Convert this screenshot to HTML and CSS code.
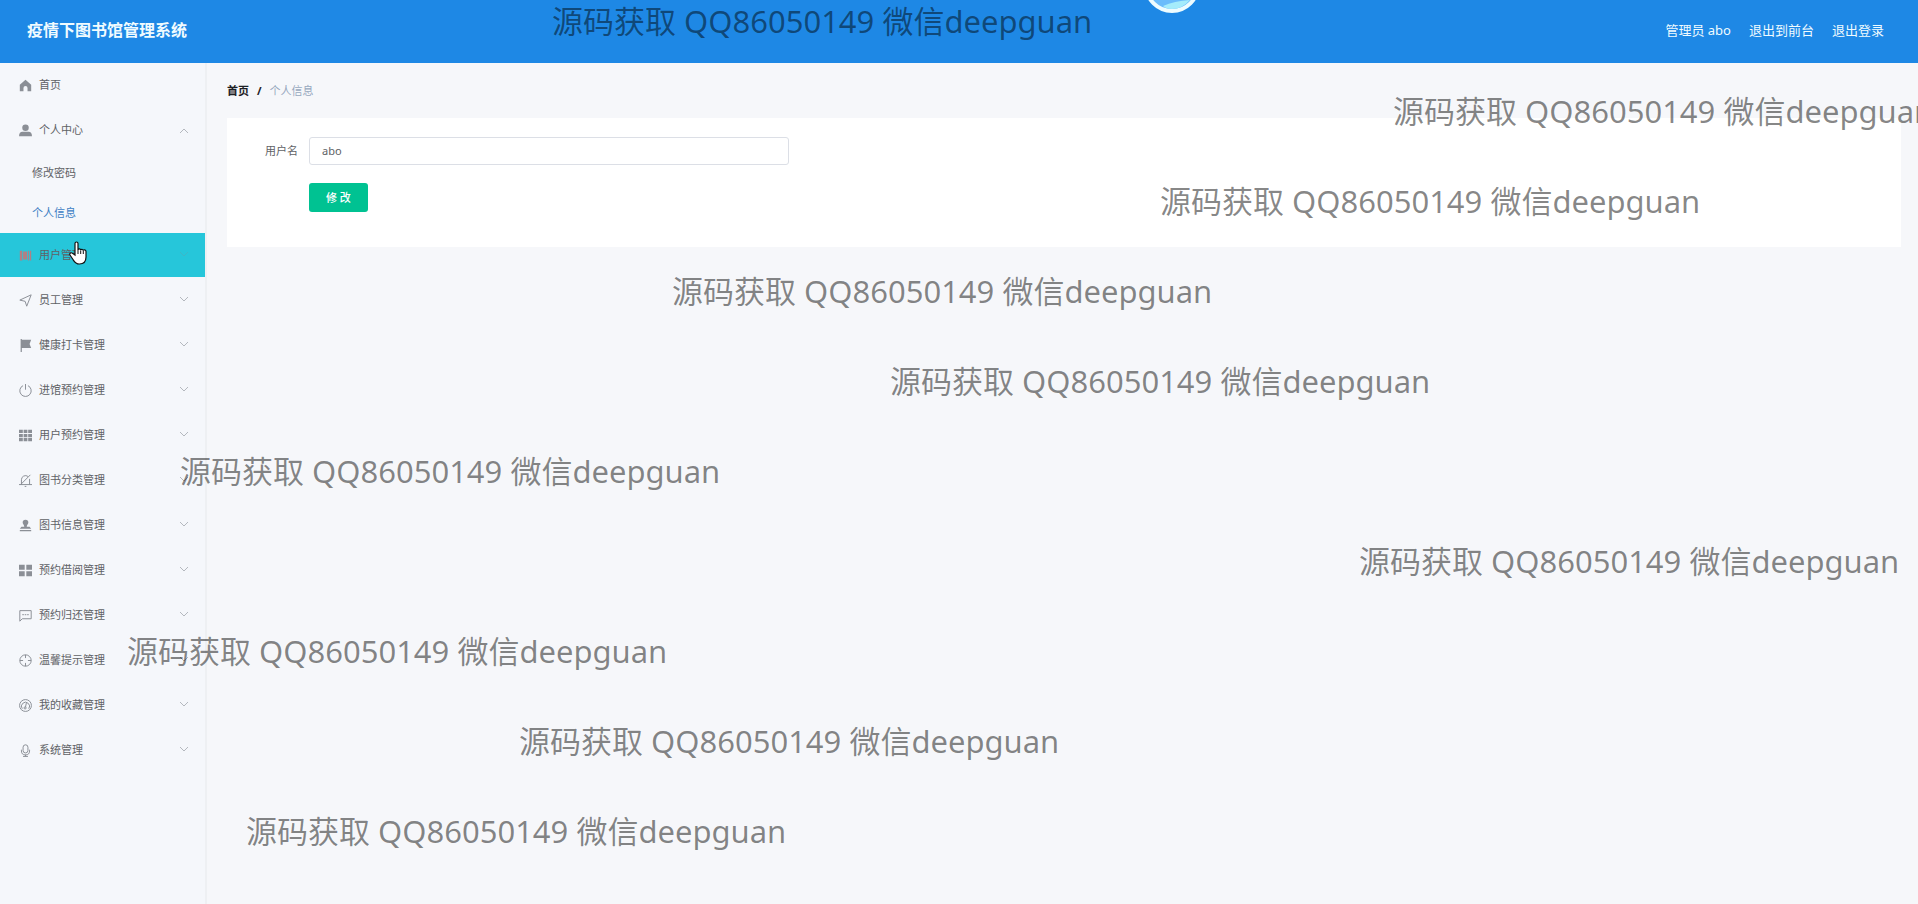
FILE: index.html
```html
<!DOCTYPE html>
<html lang="zh-CN">
<head>
<meta charset="utf-8">
<title>疫情下图书馆管理系统</title>
<link rel="stylesheet" href="styles.css">
</head>
<body>
<svg class="defs" aria-hidden="true">
  <symbol id="down" viewBox="0 0 10 10"><path d="M1 2l4 4 4-4" fill="none" stroke="currentColor"/></symbol>
</svg>
<header class="header">
  <h1 class="title">疫情下图书馆管理系统</h1>
  <nav class="account">
    <span>管理员 abo</span>
    <a href="#">退出到前台</a>
    <a href="#">退出登录</a>
  </nav>
</header>
<div class="layout">
  <aside class="sidebar">
    <ul class="menu">
      <li><a class="item" href="#"><svg class="icon" viewBox="0 0 16 16"><path class="solid" d="M8 1L1 7v8h4.500v-4a2.500 2.500 0 0 1 5 0v4H15V7z"/></svg><span>首页</span></a></li>
      <li><a class="item" href="#"><svg class="icon" viewBox="0 0 16 16"><circle class="solid" cx="8" cy="4.500" r="4"/><path class="solid" d="M0 15c0-4 2-5.500 4-5.500h8c2 0 4 1.500 4 5.500z"/></svg><span>个人中心</span><svg class="arrow open"><use href="#down"/></svg></a>
        <ul class="submenu">
          <li><a class="subitem" href="#">修改密码</a></li>
          <li><a class="subitem current" href="#">个人信息</a></li>
        </ul>
      </li>
      <li><a class="item active" href="#"><svg class="icon" viewBox="0 0 16 16"><path class="solid" d="M1 2h3v12H1zM5 3h5v10H5zM11 2h1.500v12H11zM13.500 2H15v12h-1.500z"/></svg><span>用户管理</span><svg class="arrow"><use href="#down"/></svg></a></li>
      <li><a class="item" href="#"><svg class="icon" viewBox="0 0 16 16"><path d="M1 7.500L15 1 9.500 15 7.500 9z"/></svg><span>员工管理</span><svg class="arrow"><use href="#down"/></svg></a></li>
      <li><a class="item" href="#"><svg class="icon" viewBox="0 0 16 16"><path class="solid" d="M2 0h1.500v1H15l-2 5 2 5H3.500v5H2z"/></svg><span>健康打卡管理</span><svg class="arrow"><use href="#down"/></svg></a></li>
      <li><a class="item" href="#"><svg class="icon" viewBox="0 0 16 16"><path d="M5 2a7 7 0 1 0 6 0M8 0v7"/></svg><span>进馆预约管理</span><svg class="arrow"><use href="#down"/></svg></a></li>
      <li><a class="item" href="#"><svg class="icon" viewBox="0 0 16 16"><path class="solid" d="M0 1h4.700v4H0zM5.700 1h4.600v4H5.700zM11.300 1H16v4h-4.700zM0 6h4.700v4H0zM5.700 6h4.600v4H5.700zM11.300 6H16v4h-4.700zM0 11h4.700v4H0zM5.700 11h4.600v4H5.700zM11.300 11H16v4h-4.700z"/></svg><span>用户预约管理</span><svg class="arrow"><use href="#down"/></svg></a></li>
      <li><a class="item" href="#"><svg class="icon" viewBox="0 0 16 16"><path d="M3 13V7a5 5 0 0 1 8-4M13 6v7M0 13h16M7 15.300h2M2 13L14 1"/></svg><span>图书分类管理</span><svg class="arrow"><use href="#down"/></svg></a></li>
      <li><a class="item" href="#"><svg class="icon" viewBox="0 0 16 16"><path class="solid" d="M8 1a3.500 3.500 0 0 1 3.500 3.500C11.500 6 9.500 7 9.500 9.500H13l2 2.500H1l2-2.500h3.500C6.500 7 4.500 6 4.500 4.500A3.500 3.500 0 0 1 8 1zM1 13.500h14V15H1z"/></svg><span>图书信息管理</span><svg class="arrow"><use href="#down"/></svg></a></li>
      <li><a class="item" href="#"><svg class="icon" viewBox="0 0 16 16"><path class="solid" d="M0 1h7v6H0zM9 1h7v6H9zM0 9h7v6H0zM9 9h7v6H9z"/></svg><span>预约借阅管理</span><svg class="arrow"><use href="#down"/></svg></a></li>
      <li><a class="item" href="#"><svg class="icon" viewBox="0 0 16 16"><path d="M1 2h14v10H4l-3 3zM4 7h2M7 7h2M10 7h2"/></svg><span>预约归还管理</span><svg class="arrow"><use href="#down"/></svg></a></li>
      <li><a class="item" href="#"><svg class="icon" viewBox="0 0 16 16"><circle cx="8" cy="8" r="7"/><path d="M8 1v4M8 11v4M1 8h4M11 8h4"/></svg><span>温馨提示管理</span><svg class="arrow"><use href="#down"/></svg></a></li>
      <li><a class="item" href="#"><svg class="icon" viewBox="0 0 16 16"><circle cx="8" cy="8" r="7.300"/><path d="M4 12a5 5 0 1 1 8 0M9 5L8 10"/><circle cx="7.500" cy="11" r="1.300"/></svg><span>我的收藏管理</span><svg class="arrow"><use href="#down"/></svg></a></li>
      <li><a class="item" href="#"><svg class="icon" viewBox="0 0 16 16"><rect x="5" y="1" width="6" height="10" rx="3"/><path d="M3 7v1.500a5 5 0 0 0 10 0V7M8 13v2M5 15.300h6"/></svg><span>系统管理</span><svg class="arrow"><use href="#down"/></svg></a></li>
    </ul>
  </aside>
  <main class="main">
    <nav class="breadcrumb" aria-label="breadcrumb">
      <a href="#">首页</a><span class="slash">/</span><span class="here">个人信息</span>
    </nav>
    <form class="card">
      <div class="field">
        <label for="username">用户名</label>
        <input id="username" type="text" value="abo">
      </div>
      <button class="submit" type="button">修 改</button>
    </form>
  </main>
</div>
<svg class="bubble" viewBox="0 0 56 56" aria-hidden="true">
  <circle cx="28" cy="28" r="26" fill="#6bbcfb" stroke="#eefcff" stroke-width="4"/>
  <path d="M19 49Q30 44 46 43Q38 52 28 52Q22 52 19 49z" fill="#a5ecfb"/>
</svg>
<svg class="pointer" viewBox="0 0 18 24" aria-hidden="true">
  <path d="M6 14V2.500C6 .5 9 .5 9 2.500V9c0-1.500 2.700-1.500 2.700.3 0-1.500 2.600-1.300 2.600.5 0-1.300 2.700-1.200 2.700.7V16c0 4-2 7-6.500 7-4 0-5-2-6.500-4.500L1 14c-.8-1.600 1.200-3 2.500-1.700z" fill="#fff" stroke="#111" stroke-width="1.200"/>
  <path d="M9 9v4M11.700 9.500V13M14.300 10v3" stroke="#111" fill="none"/>
</svg>
<div class="marks" aria-hidden="true">
  <span class="mark m1">源码获取 QQ86050149 微信deepguan</span>
  <span class="mark m2">源码获取 QQ86050149 微信deepguan</span>
  <span class="mark m3">源码获取 QQ86050149 微信deepguan</span>
  <span class="mark m4">源码获取 QQ86050149 微信deepguan</span>
  <span class="mark m5">源码获取 QQ86050149 微信deepguan</span>
  <span class="mark m6">源码获取 QQ86050149 微信deepguan</span>
  <span class="mark m7">源码获取 QQ86050149 微信deepguan</span>
  <span class="mark m8">源码获取 QQ86050149 微信deepguan</span>
  <span class="mark m9">源码获取 QQ86050149 微信deepguan</span>
  <span class="mark m10">源码获取 QQ86050149 微信deepguan</span>
</div>
</body>
</html>
```
FILE: styles.css
```css
* { box-sizing: border-box; }
body {
  margin: 0;
  min-height: 100vh;
  display: flex;
  flex-direction: column;
  background: #f6f7fa;
  color: #606266;
  font: 11px/16px "Noto Sans", "Noto Sans CJK SC", sans-serif;
}
a { color: inherit; text-decoration: none; }
ul { list-style: none; margin: 0; padding: 0; }
.defs { display: none; }

.header {
  display: flex;
  align-items: center;
  justify-content: space-between;
  height: 63px;
  padding: 0 34px 3px 27px;
  background: #1e88e5;
  color: #f0fbff;
}
.title { margin: 0; font-size: 16px; line-height: 24px; font-weight: 700; }
.account { display: flex; gap: 18px; font-size: 13px; line-height: 20px; }

.layout { flex: 1; display: flex; }
.sidebar {
  flex: none;
  width: 207px;
  background: #f5f7fb;
  border-right: 2px solid #eef0f3;
}
.item {
  display: flex;
  align-items: center;
  height: 44px;
  margin-bottom: 1px;
  padding: 0 16px 0 19px;
}
.item.active { background: #26c6da; }
.item.active .icon { color: #b08084; }
.item.active .arrow { color: #3fb6c6; }
.icon {
  width: 13px;
  height: 13px;
  margin-right: 7px;
  color: #8b8f96;
  fill: none;
  stroke: currentColor;
  stroke-width: 1.2;
}
.icon .solid { fill: currentColor; stroke: none; }
.arrow { width: 10px; height: 10px; margin-left: auto; color: #b4b8be; }
.arrow.open { transform: rotate(180deg); }
.subitem { display: block; padding: 0 32px; line-height: 40px; }
.subitem.current { color: #3d80c4; }

.main { flex: 1; min-width: 0; padding: 20px 17px 0 20px; }
.breadcrumb { display: flex; gap: 8px; color: #1d2025; font-weight: 700; }
.breadcrumb .here { color: #97a8be; font-weight: 400; }
.card {
  display: flex;
  flex-direction: column;
  gap: 18px;
  margin-top: 19px;
  padding: 19px 38px 35px;
  background: #fff;
}
.field { display: flex; align-items: center; gap: 11px; }
.field input {
  width: 480px;
  height: 28px;
  padding: 0 12px 2px;
  border: 1px solid #dcdfe6;
  border-radius: 3px;
  background: #fff;
  color: #606266;
  font: inherit;
}
.submit {
  align-self: flex-start;
  height: 29px;
  margin-left: 44px;
  padding: 0 17px;
  border: 0;
  border-radius: 3px;
  background: #00c292;
  color: #fff;
  font: inherit;
  font-weight: 500;
}

/* floating layers */
.bubble { position: absolute; left: 1144px; top: -43px; width: 56px; height: 56px; }
.pointer { position: absolute; left: 69px; top: 241px; width: 18px; height: 24px; }
.marks { position: absolute; inset: 0; overflow: hidden; pointer-events: none; }
.mark {
  position: absolute;
  white-space: nowrap;
  font-size: 31px;
  line-height: 40px;
  color: rgba(0, 0, 0, .48);
}
.m1 { left: 552px; top: 1px; }
.m2 { left: 1393px; top: 91px; }
.m3 { left: 1160px; top: 181px; }
.m4 { left: 672px; top: 271px; }
.m5 { left: 890px; top: 361px; }
.m6 { left: 180px; top: 451px; }
.m7 { left: 1359px; top: 541px; }
.m8 { left: 127px; top: 631px; }
.m9 { left: 519px; top: 721px; }
.m10 { left: 246px; top: 811px; }
```
